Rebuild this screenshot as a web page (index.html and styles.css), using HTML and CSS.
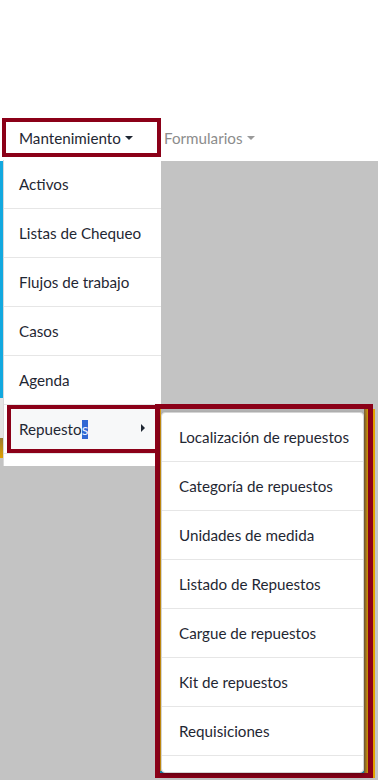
FILE: index.html
```html
<!DOCTYPE html>
<html lang="es">
<head>
  <meta charset="UTF-8">
  <meta name="viewport" content="width=device-width, initial-scale=1.0">
  <title>Mantenimiento</title>
  <link rel="stylesheet" href="styles.css">
</head>
<body>

  <header class="topbar">
    <nav class="nav">
      <a href="#" class="nav-link dropdown-toggle marcado">Mantenimiento</a>
      <a href="#" class="nav-link dropdown-toggle apagado">Formularios</a>
    </nav>
  </header>

  <main class="stage">
    <div class="edge">
      <span class="edge-azul"></span>
      <span class="edge-claro"></span>
      <span class="edge-naranja"></span>
    </div>
  </main>

  <ul class="dropdown">
    <li><a href="#">Activos</a></li>
    <li><a href="#">Listas de Chequeo</a></li>
    <li><a href="#">Flujos de trabajo</a></li>
    <li><a href="#">Casos</a></li>
    <li><a href="#">Agenda</a></li>
    <li><a href="#" class="marcado submenu-toggle">Repuesto<span class="sel">s</span></a></li>
  </ul>

  <div class="submenu-marco">
    <ul class="submenu">
      <li><a href="#">Localización de repuestos</a></li>
      <li><a href="#">Categoría de repuestos</a></li>
      <li><a href="#">Unidades de medida</a></li>
      <li><a href="#">Listado de Repuestos</a></li>
      <li><a href="#">Cargue de repuestos</a></li>
      <li><a href="#">Kit de repuestos</a></li>
      <li><a href="#">Requisiciones</a></li>
    </ul>
  </div>

</body>
</html>
```

FILE: styles.css
```css
body {
  margin: 0;
  width: 378px;
  height: 780px;
  overflow: hidden;
  position: relative;
  font-family: Lato, "Liberation Sans", sans-serif;
  font-size: 15.2px;
  color: #1f2733;
  background: #fff;
}
a {
  color: inherit;
  text-decoration: none;
}
ul {
  list-style: none;
  margin: 0;
  padding: 0;
}

/* barra superior */
.topbar {
  height: 161px;
  box-sizing: border-box;
  padding-top: 118px;
}
.nav {
  display: flex;
  align-items: center;
}
.nav-link {
  display: flex;
  align-items: center;
  height: 39px;
  box-sizing: border-box;
}
.nav-link.marcado {
  margin-left: 2px;
  width: 159px;
  padding-left: 13px;
  border: 4px solid #8b0018;
}
.nav-link.apagado {
  margin-left: 3px;
  color: #8c8c8c;
}
.dropdown-toggle::after {
  content: "";
  margin-left: 4px;
  border-top: 4px solid currentColor;
  border-left: 4px solid transparent;
  border-right: 4px solid transparent;
}
.nav-link.apagado::after {
  color: #9a9a9a;
}

/* fondo gris */
.stage {
  height: 619px;
  background: #c3c3c3;
  display: flex;
}
.edge {
  width: 3px;
  display: flex;
  flex-direction: column;
}
.edge-azul {
  height: 237px;
  background: #12a8df;
}
.edge-claro {
  height: 40px;
  background: #e4e4e4;
}
.edge-naranja {
  height: 20px;
  background: linear-gradient(#9a7a30, #e0a000);
}

/* menu principal */
.dropdown {
  position: absolute;
  left: 3px;
  top: 160px;
  width: 158px;
  box-sizing: border-box;
  padding-bottom: 12px;
  background: #fff;
  border-left: 1px solid #d8d8d8;
}
.dropdown li,
.submenu li {
  border-bottom: 1px solid #e6e6e6;
}
.dropdown a {
  display: flex;
  align-items: center;
  height: 48px;
  padding-left: 15px;
}
.dropdown a.marcado {
  height: 48px;
  box-sizing: border-box;
  margin: 0 1px 0 3px;
  padding-left: 8px;
  border: 4px solid #8b0018;
  background: #f7f8f9;
  position: relative;
}
.submenu-toggle::after {
  content: "";
  position: absolute;
  right: 11px;
  top: 15px;
  border-left: 4px solid #1f2733;
  border-top: 4px solid transparent;
  border-bottom: 4px solid transparent;
}
.sel {
  background: #3168d4;
  color: #eef3ff;
  padding-bottom: 1px;
}

/* submenu */
.submenu-marco {
  position: absolute;
  left: 155px;
  top: 404px;
  width: 218px;
  height: 374px;
  box-sizing: border-box;
  padding: 3px 4px 0 1px;
  border: 5px solid #8b0018;
  background:
    linear-gradient(to left, #d49500 0, #7a6040 4px, transparent 4px),
    linear-gradient(to top, #1a90b8 0, #1a90b8 2px, transparent 2px),
    linear-gradient(to right, #d89a10 0, #d89a10 1px, #b5b5b5 1px);
}
.submenu-marco::after {
  content: "";
  position: absolute;
  right: -7px;
  top: 0;
  bottom: -5px;
  width: 2px;
  background: #e3a200;
}
.submenu {
  height: 361px;
  box-sizing: border-box;
  background: #fff;
  border: 1px solid #d4d4d4;
  border-radius: 4px;
  box-shadow: 0 2px 4px rgba(0, 0, 0, 0.3);
}
.submenu a {
  display: flex;
  align-items: center;
  height: 48px;
  padding-left: 17px;
}
```
